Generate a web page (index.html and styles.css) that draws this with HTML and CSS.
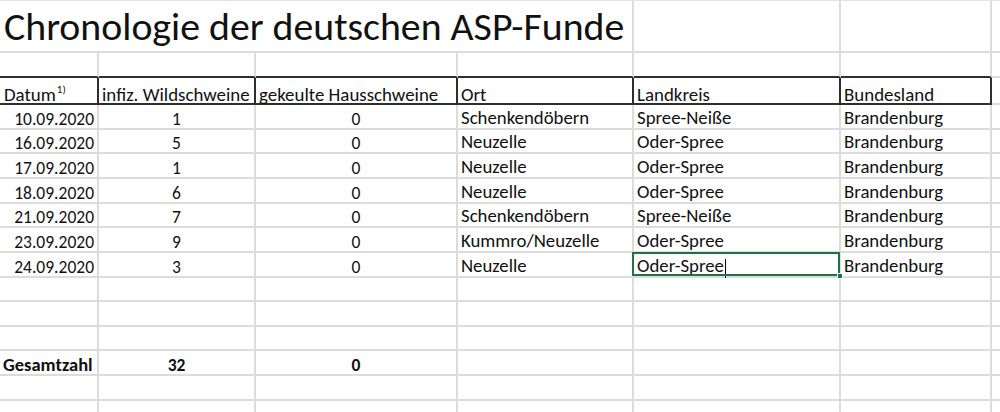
FILE: index.html
```html
<!DOCTYPE html>
<html lang="de">
<head>
<meta charset="utf-8">
<title>Chronologie der deutschen ASP-Funde</title>
<link rel="stylesheet" href="styles.css">
</head>
<body>
<div class="sheet">
  <div class="row title-row">
    <div class="cell title">Chronologie der deutschen ASP-Funde</div>
    <div class="cell"></div>
    <div class="cell"></div>
    <div class="cell"></div>
  </div>
  <div class="row r25 pre-head">
    <div class="cell"></div><div class="cell"></div><div class="cell"></div><div class="cell"></div><div class="cell"></div><div class="cell"></div><div class="cell last"></div>
  </div>
  <div class="row head">
    <div class="cell">Datum<sup class="note">1)</sup></div>
    <div class="cell">infiz. Wildschweine</div>
    <div class="cell">gekeulte Hausschweine</div>
    <div class="cell">Ort</div>
    <div class="cell">Landkreis</div>
    <div class="cell">Bundesland</div>
    <div class="cell last"></div>
  </div>
  <div class="row r25">
    <div class="cell num">10.09.2020</div><div class="cell ctr">1</div><div class="cell ctr">0</div><div class="cell">Schenkendöbern</div><div class="cell">Spree-Neiße</div><div class="cell">Brandenburg</div><div class="cell last"></div>
  </div>
  <div class="row r24">
    <div class="cell num">16.09.2020</div><div class="cell ctr">5</div><div class="cell ctr">0</div><div class="cell">Neuzelle</div><div class="cell">Oder-Spree</div><div class="cell">Brandenburg</div><div class="cell last"></div>
  </div>
  <div class="row r25">
    <div class="cell num">17.09.2020</div><div class="cell ctr">1</div><div class="cell ctr">0</div><div class="cell">Neuzelle</div><div class="cell">Oder-Spree</div><div class="cell">Brandenburg</div><div class="cell last"></div>
  </div>
  <div class="row r25">
    <div class="cell num">18.09.2020</div><div class="cell ctr">6</div><div class="cell ctr">0</div><div class="cell">Neuzelle</div><div class="cell">Oder-Spree</div><div class="cell">Brandenburg</div><div class="cell last"></div>
  </div>
  <div class="row r24">
    <div class="cell num">21.09.2020</div><div class="cell ctr">7</div><div class="cell ctr">0</div><div class="cell">Schenkendöbern</div><div class="cell">Spree-Neiße</div><div class="cell">Brandenburg</div><div class="cell last"></div>
  </div>
  <div class="row r25">
    <div class="cell num">23.09.2020</div><div class="cell ctr">9</div><div class="cell ctr">0</div><div class="cell">Kummro/Neuzelle</div><div class="cell">Oder-Spree</div><div class="cell">Brandenburg</div><div class="cell last"></div>
  </div>
  <div class="row r25">
    <div class="cell num">24.09.2020</div><div class="cell ctr">3</div><div class="cell ctr">0</div><div class="cell">Neuzelle</div><div class="cell sel">Oder-Spree<span class="caret"></span><span class="handle"></span></div><div class="cell">Brandenburg</div><div class="cell last"></div>
  </div>
  <div class="row r24">
    <div class="cell"></div><div class="cell"></div><div class="cell"></div><div class="cell"></div><div class="cell"></div><div class="cell"></div><div class="cell last"></div>
  </div>
  <div class="row r25">
    <div class="cell"></div><div class="cell"></div><div class="cell"></div><div class="cell"></div><div class="cell"></div><div class="cell"></div><div class="cell last"></div>
  </div>
  <div class="row r24">
    <div class="cell"></div><div class="cell"></div><div class="cell"></div><div class="cell"></div><div class="cell"></div><div class="cell"></div><div class="cell last"></div>
  </div>
  <div class="row r25 total">
    <div class="cell">Gesamtzahl</div><div class="cell ctr">32</div><div class="cell ctr">0</div><div class="cell"></div><div class="cell"></div><div class="cell"></div><div class="cell last"></div>
  </div>
  <div class="row r25">
    <div class="cell"></div><div class="cell"></div><div class="cell"></div><div class="cell"></div><div class="cell"></div><div class="cell"></div><div class="cell last"></div>
  </div>
  <div class="row r24">
    <div class="cell"></div><div class="cell"></div><div class="cell"></div><div class="cell"></div><div class="cell"></div><div class="cell"></div><div class="cell last"></div>
  </div>
</div>
</body>
</html>
```

FILE: styles.css
```css
* { box-sizing: border-box; }

html, body {
  margin: 0;
  padding: 0;
  background: #fff;
}

body {
  width: 1000px;
  height: 412px;
  overflow: hidden;
  font-family: Carlito, Calibri, Lato, "Open Sans", sans-serif;
  color: #111;
}

.sheet {
  display: flex;
  flex-direction: column;
  width: 1000px;
  border-top: 1px solid #e2e2e2;
}

.row {
  display: grid;
  grid-template-columns: 99px 157px 202px 176px 207px 151px 8px;
  flex: none;
}

.r24 { height: 24px; }
.r25 { height: 25px; }

.title-row {
  height: 52px;
  grid-template-columns: 634px 207px 151px 8px;
}

.head { height: 27px; }

.cell {
  display: flex;
  align-items: flex-end;
  padding: 0 3px 0 3px;
  border-right: 2px solid #dcdcdc;
  border-bottom: 2px solid #dcdcdc;
  font-size: 18.8px;
  line-height: 1;
  white-space: nowrap;
  min-width: 0;
}

.cell.last { border-right: none; }

.title {
  font-size: 39.8px;
  padding: 0 0 4px 4px;
  border-right: 2px solid #dcdcdc;
}

.title-row .cell:nth-child(4) { border-right: none; }

.pre-head .cell { border-bottom-color: #2e2e2e; }
.pre-head .cell.last { border-bottom-color: #dcdcdc; }

.head .cell {
  border-right-color: #2e2e2e;
  border-bottom-color: #2e2e2e;
  padding-bottom: 0;
  font-size: 18.9px;
  line-height: 0.9;
}
.head .cell:first-child { padding-left: 4px; }
.head .cell.last { border-bottom-color: #dcdcdc; }

.note {
  font-size: 11px;
  line-height: 1;
  align-self: flex-start;
  margin: 6px 0 0 1px;
}

.num, .ctr { font-size: 17.5px; }
.num { justify-content: flex-end; }
.ctr { justify-content: center; }

.total .cell { font-weight: bold; font-size: 18.5px; }
.total .ctr { font-size: 17.5px; }

.sel { position: relative; }
.sel::after {
  content: "";
  position: absolute;
  top: -1px;
  left: -2px;
  right: -1px;
  bottom: 0;
  border: 2px solid #217346;
  pointer-events: none;
}

.caret {
  display: inline-block;
  width: 1px;
  height: 19px;
  background: #000;
  margin: 0 0 -2px 1px;
}

.handle {
  position: absolute;
  right: -4px;
  bottom: -3px;
  width: 6px;
  height: 6px;
  background: #217346;
  border: 1px solid #fff;
  z-index: 2;
}
```
